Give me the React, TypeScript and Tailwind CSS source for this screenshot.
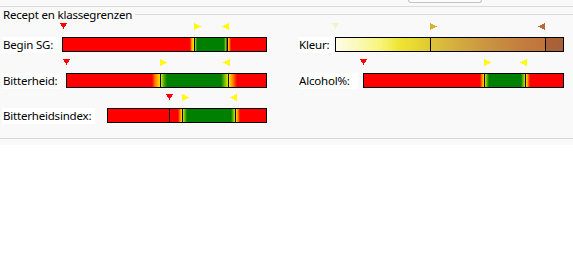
type Stop = [number, string];
type Marker = { x: number; kind: "down" | "right" | "left"; color: string };

type Scale = {
  label: string;
  labelW: number;
  barLeft: number;
  barW: number;
  markers: Marker[];
  stops: Stop[];
};

const R = "#ff0000";
const G = "#008000";
const K = "#000000";

// positions are page x; bars are drawn right-aligned in their column
const left: Scale[] = [
  {
    label: "Begin SG:",
    labelW: 56,
    barLeft: 62,
    barW: 205,
    markers: [
      { x: 60, kind: "down", color: "#ff0000" },
      { x: 194, kind: "right", color: "#ffff00" },
      { x: 222, kind: "left", color: "#ffff00" },
    ],
    stops: [
      [63, R], [190, R], [191.5, "#ff8a00"], [193, "#ffd800"], [194, "#ffe000"],
      [194, K], [195, K], [195, "#b8dc30"], [197, G], [224, G], [226, "#b0d820"],
      [227, K], [228, K], [228, "#ffd800"], [229.5, "#ff8000"], [231, R], [266, R],
    ],
  },
  {
    label: "Bitterheid:",
    labelW: 58,
    barLeft: 66,
    barW: 201,
    markers: [
      { x: 63, kind: "down", color: "#ff0000" },
      { x: 160, kind: "right", color: "#ffff00" },
      { x: 223, kind: "left", color: "#ffff00" },
    ],
    stops: [
      [67, R], [152, R], [155, "#ff7a00"], [160, "#ffe000"], [160, K], [161, K],
      [161, "#d8e800"], [164, "#50a800"], [167, G], [221, G], [224, "#60b000"],
      [228, "#e0e800"], [228, K], [229, K], [229, "#ffe000"], [233, "#ff8000"],
      [237, R], [266, R],
    ],
  },
  {
    label: "Bitterheidsindex:",
    labelW: 93,
    barLeft: 107,
    barW: 160,
    markers: [
      { x: 166, kind: "down", color: "#ff0000" },
      { x: 182, kind: "right", color: "#ffff00" },
      { x: 230, kind: "left", color: "#ffff00" },
    ],
    stops: [
      [108, R], [169, R], [169, K], [170, K], [170, R], [178, R], [180, "#ff8000"],
      [182, "#ffe000"], [182, K], [183, K], [183, "#d0e400"], [187, G], [231, G],
      [235, "#d0e400"], [235, K], [236, K], [236, "#ffe000"], [238, "#ff8000"],
      [240, R], [266, R],
    ],
  },
];

const right: Scale[] = [
  {
    label: "Kleur:",
    labelW: 35,
    barLeft: 335,
    barW: 229,
    markers: [
      { x: 332, kind: "down", color: "#f6f2c8" },
      { x: 430, kind: "right", color: "#d6b232" },
      { x: 538, kind: "left", color: "#b8683a" },
    ],
    stops: [
      [336, "#fdfce6"], [358, "#fbf9b8"], [380, "#f8f57a"], [400, "#eee434"],
      [420, "#e4d430"], [430, "#dcc836"], [430, K], [431, K], [431, "#dcc43a"],
      [460, "#d2aa40"], [490, "#c99242"], [520, "#c47e3e"], [545, "#c0743a"],
      [545, K], [546, K], [546, "#aa623a"], [563, "#a86038"],
    ],
  },
  {
    label: "Alcohol%:",
    labelW: 60,
    barLeft: 363,
    barW: 201,
    markers: [
      { x: 360, kind: "down", color: "#ff0000" },
      { x: 484, kind: "right", color: "#ffff00" },
      { x: 520, kind: "left", color: "#ffff00" },
    ],
    stops: [
      [364, R], [480, R], [482, "#ff8000"], [484, "#ffe000"], [484, K], [485, K],
      [485, "#d0e400"], [489, G], [521, G], [525, "#d0e400"], [525, K], [526, K],
      [526, "#ffe000"], [528, "#ff8000"], [530, R], [563, R],
    ],
  },
];

function gradient(s: Scale) {
  const o = s.barLeft + 1;
  return `linear-gradient(to right, ${s.stops
    .map(([x, c]) => `${c} ${x - o}px`)
    .join(", ")})`;
}

function Arrow({ m, colLeft }: { m: Marker; colLeft: number }) {
  const pts =
    m.kind === "down" ? "0,0 7,0 3.5,6" : m.kind === "right" ? "0,0 7,3.5 0,7" : "7,0 0,3.5 7,7";
  return (
    <svg
      width={7}
      height={7}
      className="absolute top-px"
      style={{ left: m.x - colLeft }}
      shapeRendering="crispEdges"
    >
      <polygon points={pts} fill={m.color} />
    </svg>
  );
}

function Row({ s, colLeft }: { s: Scale; colLeft: number }) {
  return (
    <div className="mb-[5px] first:mb-[6px]">
      <div className="relative h-[15px]">
        {s.markers.map((m, i) => (
          <Arrow key={i} m={m} colLeft={colLeft} />
        ))}
      </div>
      <div className="flex h-[15px] items-start justify-between">
        <div className="h-[16px] bg-white pl-px leading-[16px]" style={{ width: s.labelW }}>
          {s.label}
        </div>
        <div
          className="h-[15px] border border-black"
          style={{ width: s.barW, backgroundImage: gradient(s) }}
        />
      </div>
    </div>
  );
}

export default function App() {
  return (
    <div
      className="h-[266px] w-[573px] overflow-hidden bg-white text-[11.5px] tracking-[-0.2px] text-black"
      style={{ fontFamily: '"Noto Sans", sans-serif' }}
    >
      <div className="h-[145px] bg-[#f9f9f9]">
        <div className="h-[7px] border-b border-[#dadada]">
          <div className="ml-[408px] h-[3px] w-[74px] rounded-b-[4px] border border-t-0 border-[#c4c4c4] bg-[#fbfbfb]" />
        </div>
        <div className="flex h-[15px] items-center">
          <span className="ml-[3px] leading-[15px]">Recept en klassegrenzen</span>
          <div className="ml-[3px] h-px flex-1 bg-[#dadada]" />
        </div>
        <div className="flex">
          <div className="ml-[2px] w-[265px]">
            {left.map((s) => (
              <Row key={s.label} s={s} colLeft={2} />
            ))}
          </div>
          <div className="ml-[31px] w-[266px]">
            {right.map((s) => (
              <Row key={s.label} s={s} colLeft={298} />
            ))}
          </div>
        </div>
        <div className="mt-[10px] h-px bg-[#d6d6d6]" />
      </div>
    </div>
  );
}
